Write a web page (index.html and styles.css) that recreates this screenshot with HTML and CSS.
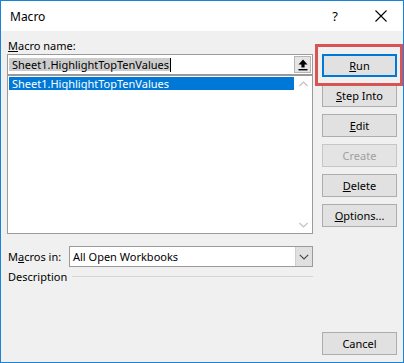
FILE: index.html
```html
<!DOCTYPE html>
<html>
<head>
<meta charset="utf-8">
<link rel="stylesheet" href="styles.css">
</head>
<body>
<div class="window">
  <div class="titlebar">
    <span class="title">Macro</span>
    <span class="help">?</span>
    <span class="close"><svg width="12" height="12" viewBox="0 0 12 12"><path d="M0.5 0.5 L11.5 11.5 M11.5 0.5 L0.5 11.5" stroke="#000" stroke-width="1.1" fill="none"/></svg></span>
  </div>
  <div class="body">
    <div class="left">
      <div class="label"><u>M</u>acro name:</div>
      <div class="input">
        <span class="sel">Sheet1.HighlightTopTenValues</span><span class="caret"></span>
        <span class="pick"><svg width="10" height="12" viewBox="0 0 10 12"><path d="M5 0.5 L9.5 5.5 L6.6 5.5 L6.6 8.5 L3.4 8.5 L3.4 5.5 L0.5 5.5 Z" fill="#000"/><rect x="0.5" y="10" width="9" height="1.4" fill="#000"/></svg></span>
      </div>
      <div class="list">
        <div class="items"><div class="item selected">Sheet1.HighlightTopTenValues</div></div>
        <div class="scrollbar">
          <svg width="17" height="17" viewBox="0 0 17 17"><path d="M4.5 10 L8.5 6 L12.5 10" stroke="#c2c2c2" stroke-width="1.2" fill="none"/></svg>
          <svg width="17" height="17" viewBox="0 0 17 17"><path d="M4.5 7 L8.5 11 L12.5 7" stroke="#c2c2c2" stroke-width="1.2" fill="none"/></svg>
        </div>
      </div>
      <div class="macros-in">
        <span class="lbl">M<u>a</u>cros in:</span>
        <div class="combo">
          <span class="combo-text">All Open Workbooks</span>
          <span class="drop"><svg width="10" height="6" viewBox="0 0 10 6"><path d="M0.8 0.8 L5 5 L9.2 0.8" stroke="#444" stroke-width="1.1" fill="none"/></svg></span>
        </div>
      </div>
      <div class="desc"><span>Description</span><div class="rule"></div></div>
    </div>
    <div class="right">
      <button class="btn run"><u>R</u>un</button>
      <button class="btn"><u>S</u>tep Into</button>
      <button class="btn"><u>E</u>dit</button>
      <button class="btn disabled">Create</button>
      <button class="btn"><u>D</u>elete</button>
      <button class="btn"><u>O</u>ptions...</button>
      <div class="spacer"></div>
      <button class="btn">Cancel</button>
    </div>
  </div>
</div>
</body>
</html>
```

FILE: styles.css
```css
* { box-sizing: border-box; }
html, body { margin: 0; padding: 0; }
body {
  font-family: "Noto Sans", "Open Sans", sans-serif;
  font-size: 11px;
  color: #000;
  background: #fff;
}
.window {
  width: 404px;
  height: 363px;
  border: 1px solid #1883d7;
  display: flex;
  flex-direction: column;
  background: #f0f0f0;
}
.titlebar {
  height: 30px;
  background: #fff;
  display: flex;
  align-items: center;
  position: relative;
  padding-left: 9px;
}
.title { font-size: 12px; flex: 1; }
.help {
  font-size: 13px;
  width: 12px;
  text-align: center;
  margin-right: 34px;
}
.close {
  display: flex;
  width: 12px;
  height: 12px;
  margin-right: 16px;
}
.body {
  flex: 1;
  display: flex;
  gap: 9px;
  padding: 0 6px 7px 6px;
}
.left {
  width: 306px;
  display: flex;
  flex-direction: column;
  padding-top: 7px;
}
.label {
  height: 16px;
  line-height: 16px;
  padding-left: 1px;
}
.input {
  height: 21px;
  background: #fff;
  border: 1px solid #9a9a9a;
  display: flex;
  align-items: center;
  padding-left: 1px;
  position: relative;
}
.sel {
  background: #cccccc;
  line-height: 13px;
  padding: 0 1px 0 3px;
}
.caret {
  width: 1px;
  height: 14px;
  background: #000;
}
.pick {
  margin-left: auto;
  margin-right: 1px;
  width: 17px;
  height: 17px;
  background: #e5e5e5;
  border: 1px solid #b5b5b5;
  display: flex;
  align-items: center;
  justify-content: center;
}
.list {
  height: 159px;
  background: #fff;
  border: 1px solid #9a9a9a;
  display: flex;
}
.items {
  flex: 1;
  padding: 1px 1px 0 1px;
}
.item {
  height: 13px;
  line-height: 13px;
  padding-left: 3px;
}
.item.selected {
  background: #0078d7;
  color: #fff;
}
.scrollbar {
  width: 17px;
  display: flex;
  flex-direction: column;
  justify-content: space-between;
  background: #fff;
}
.scrollbar svg { display: block; }
.macros-in {
  margin-top: 12px;
  height: 21px;
  display: flex;
  align-items: center;
}
.lbl {
  width: 62px;
  padding-left: 1px;
}
.combo {
  flex: 1;
  height: 21px;
  background: #fff;
  border: 1px solid #9a9a9a;
  display: flex;
  align-items: center;
}
.combo-text {
  flex: 1;
  padding-left: 3px;
}
.drop {
  width: 17px;
  height: 19px;
  background: #e0e0e0;
  border-left: 1px solid #cfcfcf;
  display: flex;
  align-items: center;
  justify-content: center;
}
.desc {
  margin-top: 2px;
  height: 16px;
  line-height: 16px;
  display: flex;
  align-items: center;
  gap: 5px;
  padding-left: 1px;
}
.rule {
  flex: 1;
  height: 1px;
  background: #d5d5d5;
  margin-top: -1px;
}
.right {
  width: 75px;
  display: flex;
  flex-direction: column;
  gap: 7px;
  padding-top: 23px;
}
.btn {
  width: 75px;
  height: 23px;
  background: #e1e1e1;
  border: 1px solid #adadad;
  font-family: inherit;
  font-size: 11px;
  color: #000;
  padding: 0;
  margin: 0;
}
.btn.run {
  border: 2px solid #0078d7;
  position: relative;
}
.btn.run::after {
  content: "";
  position: absolute;
  left: -9px;
  right: -8px;
  top: -12px;
  bottom: -11px;
  border: 3px solid #d85353;
}
.btn.disabled {
  color: #a0a0a0;
  border-color: #c6c6c6;
  background: #e4e4e4;
}
.spacer { flex: 1; }
```
